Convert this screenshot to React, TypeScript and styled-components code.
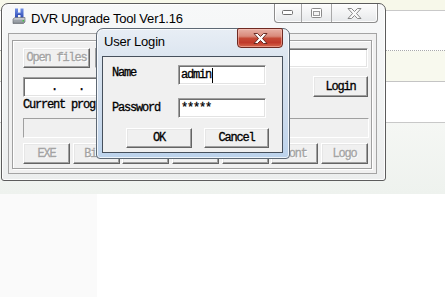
import React from "react";
import styled, { createGlobalStyle } from "styled-components";

const Global = createGlobalStyle`
  html, body { margin: 0; padding: 0; background: #fff; }
  body { width: 445px; height: 297px; overflow: hidden; }
`;

const MONO = `"Liberation Mono", "DejaVu Sans Mono", monospace`;
const SANS = `"Liberation Sans", Arial, sans-serif`;

const Desktop = styled.div`
  position: relative;
  width: 445px;
  height: 297px;
  overflow: hidden;
  display: flex;
  flex-direction: column;
  background: #fff;
  font-family: ${MONO};
`;

const Band = styled.div<{ $h: number; $bg: string; $line?: string }>`
  flex-shrink: 0;
  height: ${(p) => p.$h}px;
  background: ${(p) => p.$bg};
  ${(p) => (p.$line ? `border-bottom: 1px ${p.$line};` : "")}
`;

const BottomBand = styled.div`
  flex: 1;
  display: flex;
`;

const BottomLeft = styled.div`
  width: 97px;
  background: #fafafa;
`;

const BottomRight = styled.div`
  flex: 1;
  background: #fff;
`;

/* ---------- main window ---------- */

const MainWindow = styled.div`
  position: absolute;
  left: 1px;
  top: 3px;
  width: 385px;
  height: 178px;
  box-sizing: border-box;
  border: 1px solid #5c5c5c;
  border-radius: 7px 7px 3px 3px;
  background: linear-gradient(180deg, #f7f8f9 0%, #f1f3f3 60%, #eceeee 100%);
  box-shadow: inset 0 0 0 1px rgba(255, 255, 255, 0.85);
  display: flex;
  flex-direction: column;
`;

const TitleBar = styled.div`
  height: 29px;
  flex-shrink: 0;
  display: flex;
  align-items: flex-start;
  padding: 0 7px 0 10px;
`;

const AppIcon = styled.svg`
  width: 14px;
  height: 16px;
  margin-top: 4px;
  flex-shrink: 0;
`;

const Caption = styled.span<{ $lh: number; $ml: number }>`
  font-family: ${SANS};
  font-size: 13px;
  letter-spacing: -0.2px;
  line-height: ${(p) => p.$lh}px;
  margin-left: ${(p) => p.$ml}px;
  color: #000;
  white-space: nowrap;
`;

const CaptionGroup = styled.div`
  margin-left: auto;
  display: flex;
  height: 19px;
  box-sizing: border-box;
  border: 1px solid #8c8c8c;
  border-top: none;
  border-radius: 0 0 4px 4px;
  overflow: hidden;
  background: linear-gradient(180deg, #fdfdfd 0%, #f2f3f4 50%, #e6e8ea 100%);
  box-shadow: inset 0 0 0 1px rgba(255, 255, 255, 0.9);
`;

const CapBtn = styled.div<{ $w: number }>`
  width: ${(p) => p.$w}px;
  display: flex;
  align-items: center;
  justify-content: center;
  & + & {
    border-left: 1px solid #a9a9a9;
  }
`;

const WinBody = styled.div`
  flex: 1;
  display: flex;
  padding: 0 8px 6px 6px;
`;

const Client = styled.div`
  flex: 1;
  display: flex;
  box-sizing: border-box;
  border: 1px solid #a4a4a4;
  background: #f0f0f0;
  padding: 6px 4px 4px 3px;
`;

const Group = styled.div`
  flex: 1;
  box-sizing: border-box;
  border: 1px solid #a0a0a0;
  box-shadow: inset 1px 1px 0 #fff, 1px 1px 0 #fff;
  padding: 7px 3px 0 10px;
  display: flex;
  flex-direction: column;
`;

const Row = styled.div<{ $h: number; $mt: number }>`
  height: ${(p) => p.$h}px;
  margin-top: ${(p) => p.$mt}px;
  display: flex;
  align-items: center;
  flex-shrink: 0;
`;

const monoText = `
  font-family: ${MONO};
  font-size: 12px;
  letter-spacing: -1.2px;
  line-height: 12px;
  -webkit-text-stroke: 0.3px currentColor;
`;

const Btn = styled.button<{ $w?: number; $h?: number; $off?: boolean }>`
  box-sizing: border-box;
  width: ${(p) => (p.$w ? `${p.$w}px` : "auto")};
  height: ${(p) => (p.$h ? `${p.$h}px` : "100%")};
  margin: 0;
  padding: 0;
  background: #f0f0f0;
  border: 1px solid;
  border-color: #fff #646464 #646464 #fff;
  box-shadow: inset -1px -1px 0 #a0a0a0, inset 1px 1px 0 #e6e6e6;
  display: flex;
  align-items: center;
  justify-content: center;
  ${monoText}
  color: ${(p) => (p.$off ? "#a3a3a3" : "#000")};
  text-shadow: ${(p) => (p.$off ? "1px 1px 0 #fff" : "none")};
  white-space: nowrap;
  overflow: hidden;
`;

const Edit = styled.div<{ $w?: number; $grow?: boolean; $ml?: number }>`
  box-sizing: border-box;
  height: 20px;
  ${(p) => (p.$w ? `width: ${p.$w}px;` : "")}
  ${(p) => (p.$grow ? "flex: 1;" : "")}
  margin-left: ${(p) => p.$ml ?? 0}px;
  background: #fff;
  border: 1px solid;
  border-color: #a0a0a0 #fff #fff #a0a0a0;
  box-shadow: inset 1px 1px 0 #6e6e6e, inset -1px -1px 0 #e3e3e3;
  display: flex;
  align-items: center;
  padding-left: 2px;
  ${monoText}
  color: #000;
  white-space: nowrap;
  overflow: hidden;
`;

const IpField = styled.span<{ $w: number }>`
  width: ${(p) => p.$w}px;
  flex-shrink: 0;
`;

const IpDot = styled.span`
  width: 6px;
  flex-shrink: 0;
  text-align: center;
  letter-spacing: 0;
`;

const Spacer = styled.div`
  flex: 1;
`;

const Label = styled.div<{ $mt?: number }>`
  ${monoText}
  color: #000;
  white-space: nowrap;
  margin-top: ${(p) => p.$mt ?? 0}px;
`;

const Progress = styled.div`
  box-sizing: border-box;
  height: 20px;
  margin-top: 7px;
  margin-right: -1px;
  flex-shrink: 0;
  border: 1px solid;
  border-color: #a0a0a0 #fff #fff #a0a0a0;
  background: #f0f0f0;
`;

const ButtonStrip = styled.div`
  margin-top: 5px;
  height: 21px;
  display: grid;
  grid-template-columns: repeat(7, 1fr);
  column-gap: 2.5px;
  flex-shrink: 0;
`;

/* ---------- dialog ---------- */

const Dialog = styled.div`
  position: absolute;
  left: 96px;
  top: 28px;
  width: 194px;
  height: 131px;
  box-sizing: border-box;
  border: 1px solid #5d6874;
  border-radius: 7px 7px 4px 4px;
  background: linear-gradient(180deg, #e8eef5 0%, #dae4ef 25%, #cbdaec 70%, #bcd3ec 100%);
  box-shadow: inset 0 0 0 1px rgba(255, 255, 255, 0.75);
  display: flex;
  flex-direction: column;
`;

const DlgTitle = styled.div`
  height: 27px;
  flex-shrink: 0;
  display: flex;
  align-items: flex-start;
  padding: 0 6px 0 7px;
`;

const CloseRed = styled.div`
  margin-left: auto;
  margin-top: -1px;
  width: 46px;
  height: 20px;
  box-sizing: border-box;
  border: 1px solid #6e2a22;
  border-radius: 2px 2px 4px 4px;
  background: linear-gradient(
    180deg,
    #e7b1a6 0%,
    #d98a7b 40%,
    #c44a36 52%,
    #c0392a 75%,
    #d5684d 100%
  );
  box-shadow: inset 0 0 0 1px rgba(255, 200, 190, 0.5);
  display: flex;
  align-items: center;
  justify-content: center;
`;

const DlgBody = styled.div`
  flex: 1;
  display: flex;
  padding: 0 6px 5px 5px;
`;

const DlgClient = styled.div`
  flex: 1;
  box-sizing: border-box;
  border: 1px solid #46505c;
  background: #f0f0f0;
  padding: 8px 0 0 9px;
  display: flex;
  flex-direction: column;
`;

const Form = styled.div`
  display: grid;
  grid-template-columns: 66px 88px;
  grid-auto-rows: 20px;
  row-gap: 13px;
`;

const Caret = styled.span`
  display: inline-block;
  width: 1px;
  height: 15px;
  background: #000;
  margin-left: 1px;
`;

const DlgButtons = styled.div`
  margin-top: 10px;
  margin-left: 14px;
  display: flex;
  gap: 12px;
  height: 20px;
`;

export default function App() {
  return (
    <>
      <Global />
      <Desktop>
        <Band $h={10} $bg="#f7f8ea" $line="solid #c9c9c9" />
        <Band $h={39} $bg="#ffffff" $line="dotted #a9a9a9" />
        <Band $h={30} $bg="#f8f9ee" $line="solid #c4c4c4" />
        <Band $h={40} $bg="#ffffff" $line="solid #c8c8c8" />
        <Band $h={71} $bg="linear-gradient(180deg, #f5f7f4 0%, #eef2ee 100%)" />
        <BottomBand>
          <BottomLeft />
          <BottomRight />
        </BottomBand>

        <MainWindow>
          <TitleBar>
            <AppIcon viewBox="0 0 14 16">
              <defs>
                <linearGradient id="hb" x1="0" y1="0" x2="0" y2="1">
                  <stop offset="0" stopColor="#6f8fe6" />
                  <stop offset="1" stopColor="#2a45b0" />
                </linearGradient>
                <linearGradient id="dr" x1="0" y1="0" x2="0" y2="1">
                  <stop offset="0" stopColor="#d6d9dd" />
                  <stop offset="1" stopColor="#7d838b" />
                </linearGradient>
              </defs>
              <rect x="3" y="0.5" width="3" height="10" fill="url(#hb)" />
              <rect x="8.5" y="0.5" width="3" height="10" fill="url(#hb)" />
              <rect x="5" y="4.5" width="4" height="2.5" fill="url(#hb)" />
              <path d="M1 11 L3 9.5 H13 L13 14 L11.5 15.5 H1 Z" fill="url(#dr)" stroke="#5c6168" strokeWidth="0.6" />
              <rect x="2" y="12.2" width="8" height="1.2" fill="#9aa0a8" />
              <rect x="10.5" y="12" width="1.5" height="1.5" fill="#3cc43c" />
            </AppIcon>
            <Caption $lh={29} $ml={5}>DVR Upgrade Tool Ver1.16</Caption>
            <CaptionGroup>
              <CapBtn $w={26}>
                <svg width="12" height="6" viewBox="0 0 12 6">
                  <rect x="0.5" y="0.5" width="10" height="4" rx="1" fill="#fff" stroke="#6f6f6f" />
                </svg>
              </CapBtn>
              <CapBtn $w={29}>
                <svg width="12" height="11" viewBox="0 0 12 11">
                  <rect x="0.5" y="0.5" width="10" height="9" rx="1" fill="#fff" stroke="#8a8a8a" />
                  <rect x="2.5" y="3.5" width="6" height="4" fill="#f4f4f4" stroke="#9a9a9a" />
                </svg>
              </CapBtn>
              <CapBtn $w={45}>
                <svg width="15" height="11" viewBox="0 0 15 11">
                  <path
                    d="M1 0.5 H4.5 L7.5 3.5 L10.5 0.5 H14 L9.5 5.5 L14 10.5 H10.5 L7.5 7.5 L4.5 10.5 H1 L5.5 5.5 Z"
                    fill="#fafafa"
                    stroke="#7a7a7a"
                    strokeWidth="0.9"
                    strokeLinejoin="round"
                  />
                </svg>
              </CapBtn>
            </CaptionGroup>
          </TitleBar>
          <WinBody>
            <Client>
              <Group>
                <Row $h={20} $mt={0}>
                  <Btn $w={67} $off>Open files</Btn>
                  <Edit $grow $ml={5} />
                </Row>
                <Row $h={21} $mt={8}>
                  <Edit $w={112}>
                    <IpField $w={25} />
                    <IpDot>.</IpDot>
                    <IpField $w={21} />
                    <IpDot>.</IpDot>
                    <IpField $w={21} />
                    <IpDot>.</IpDot>
                    <IpField $w={21} />
                  </Edit>
                  <Spacer />
                  <Btn $w={55} $h={21}>Login</Btn>
                </Row>
                <Label $mt={2}>Current progress</Label>
                <Progress />
                <ButtonStrip>
                  {["EXE", "Bios", "Boot", "Kernel", "Web", "Font", "Logo"].map((t) => (
                    <Btn key={t} $off>
                      {t}
                    </Btn>
                  ))}
                </ButtonStrip>
              </Group>
            </Client>
          </WinBody>
        </MainWindow>

        <Dialog>
          <DlgTitle>
            <Caption $lh={25} $ml={0}>User Login</Caption>
            <CloseRed>
              <svg width="15" height="11" viewBox="0 0 15 11">
                <path
                  d="M1 0.5 H4.5 L7.5 3.5 L10.5 0.5 H14 L9.5 5.5 L14 10.5 H10.5 L7.5 7.5 L4.5 10.5 H1 L5.5 5.5 Z"
                  fill="#ffffff"
                  stroke="#5a1f18"
                  strokeWidth="0.9"
                  strokeLinejoin="round"
                />
              </svg>
            </CloseRed>
          </DlgTitle>
          <DlgBody>
            <DlgClient>
              <Form>
                <Label $mt={2}>Name</Label>
                <Edit>
                  admin
                  <Caret />
                </Edit>
                <Label $mt={4}>Password</Label>
                <Edit>*****</Edit>
              </Form>
              <DlgButtons>
                <Btn $w={66}>OK</Btn>
                <Btn $w={65}>Cancel</Btn>
              </DlgButtons>
            </DlgClient>
          </DlgBody>
        </Dialog>
      </Desktop>
    </>
  );
}
